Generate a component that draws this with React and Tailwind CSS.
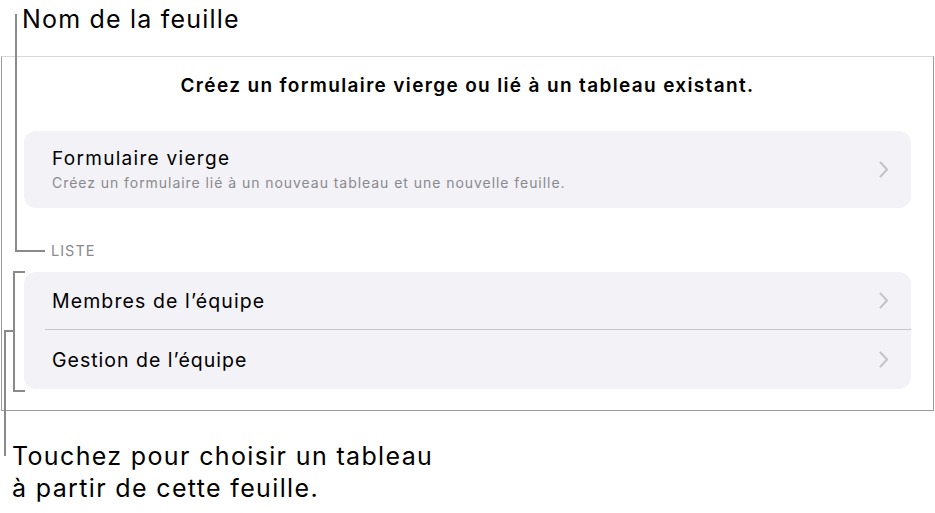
export default function App() {
  const Chevron = () => (
    <svg width="10" height="17" viewBox="0 0 10 17" fill="none" className="shrink-0">
      <path d="M1.5 1.5 L8 8.5 L1.5 15.5" stroke="#c4c4c7" strokeWidth="2" strokeLinecap="round" strokeLinejoin="round" />
    </svg>
  );
  return (
    <div className="relative w-[935px] h-[513px] bg-white overflow-hidden text-black" style={{ fontFamily: "Inter, 'Noto Sans', sans-serif" }}>
      <div className="h-[56px] pl-[22px] pt-[4px] text-[25px] leading-[30px] tracking-[1.2px]">Nom de la feuille</div>
      <div className="ml-[1px] w-[933px] h-[355px] border border-[#9b9b9b] border-t-[#d8d8d8] px-[22px] pt-[15px] flex flex-col">
        <div className="text-center font-semibold text-[19px] leading-[28px] tracking-[1.35px]">Créez un formulaire vierge ou lié à un tableau existant.</div>
        <div className="mt-[31px] h-[77px] rounded-[12px] bg-[#f2f2f7] flex items-center pl-[28px] pr-[22px]">
          <div className="flex-1 flex flex-col">
            <div className="text-[19px] leading-[24px] tracking-[1.3px]">Formulaire vierge</div>
            <div className="text-[14px] leading-[20px] text-[#8a8a8e] mt-[2px] tracking-[0.95px]">Créez un formulaire lié à un nouveau tableau et une nouvelle feuille.</div>
          </div>
          <Chevron />
        </div>
        <div className="mt-[34px] h-[18px] pl-[27px] text-[14.5px] leading-[18px] text-[#8a8a8e] tracking-[1px]">LISTE</div>
        <div className="mt-[12px] h-[117px] rounded-[12px] bg-[#f2f2f7] flex flex-col">
          <div className="h-[58px] flex flex-col">
            <div className="flex-1 flex items-center pl-[28px] pr-[22px]">
              <div className="flex-1 text-[19.5px] tracking-[1.1px] pt-[3px]">Membres de l’équipe</div>
              <Chevron />
            </div>
            <div className="ml-[21px] h-[1px] bg-[#c6c6c8]" />
          </div>
          <div className="flex-1 flex items-center pl-[28px] pr-[22px]">
            <div className="flex-1 text-[19.5px] tracking-[1px] pt-[3px]">Gestion de l’équipe</div>
            <Chevron />
          </div>
        </div>
      </div>
      <div className="pl-[12px] pt-[29px] text-[25px] leading-[32px] tracking-[1.35px]">
        <div>Touchez pour choisir un tableau</div>
        <div>à partir de cette feuille.</div>
      </div>
      {/* callout lines */}
      <div className="absolute left-[15px] top-[14px] w-[2px] h-[238px] bg-[#8a8a8a]" />
      <div className="absolute left-[15px] top-[250px] w-[30px] h-[2px] bg-[#8a8a8a]" />
      <div className="absolute left-[13px] top-[271px] w-[2px] h-[121px] bg-[#8a8a8a]" />
      <div className="absolute left-[13px] top-[271px] w-[12px] h-[2px] bg-[#8a8a8a]" />
      <div className="absolute left-[13px] top-[390px] w-[12px] h-[2px] bg-[#8a8a8a]" />
      <div className="absolute left-[4px] top-[330px] w-[10px] h-[2px] bg-[#8a8a8a]" />
      <div className="absolute left-[4px] top-[330px] w-[2px] h-[126px] bg-[#8a8a8a]" />
    </div>
  );
}
